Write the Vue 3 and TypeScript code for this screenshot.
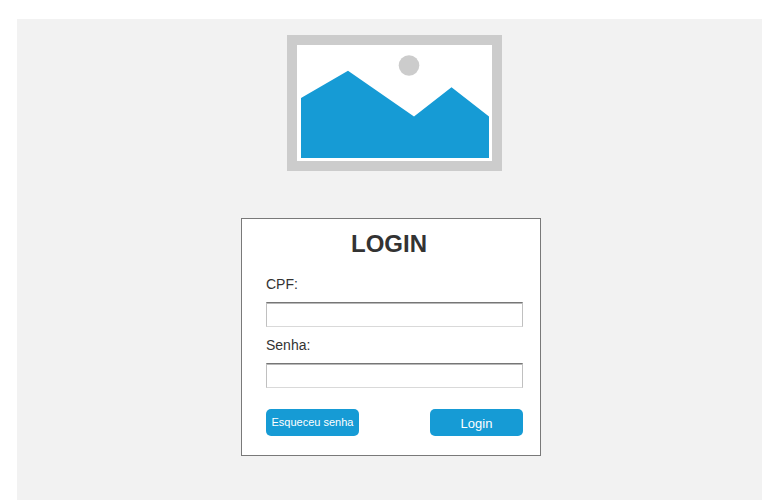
<script setup lang="ts">
import { ref } from 'vue'

const cpf = ref('')
const senha = ref('')
</script>

<template>
  <main class="page">
    <svg class="picture" width="215" height="136" viewBox="0 0 215 136" aria-hidden="true">
      <rect width="215" height="136" fill="#cccccc" />
      <rect x="10" y="10" width="195" height="116" fill="#ffffff" />
      <circle cx="122" cy="30.5" r="10.3" fill="#cccccc" />
      <polygon points="14,63 61,35.7 127,81.5 164.5,52.2 202,81.5 202,123 14,123" fill="#169bd5" />
    </svg>
    <form class="card" @submit.prevent>
      <h1 class="title">LOGIN</h1>
      <label class="label" for="cpf">CPF:</label>
      <input id="cpf" v-model="cpf" class="field" type="text" />
      <label class="label second" for="senha">Senha:</label>
      <input id="senha" v-model="senha" class="field" type="password" />
      <div class="actions">
        <button class="button small" type="button">Esqueceu senha</button>
        <button class="button" type="submit">Login</button>
      </div>
    </form>
  </main>
</template>

<style>
body {
  background: #ffffff;
  overflow: hidden;
}
</style>

<style scoped>
.page {
  box-sizing: border-box;
  height: 481px;
  margin: 19px 0 0 17px;
  padding-top: 16px;
  background: #f2f2f2;
  color: #333333;
  font-family: "Liberation Sans", Arial, sans-serif;
}
.picture {
  display: block;
  margin-left: 270px;
}
.card {
  box-sizing: border-box;
  display: flex;
  flex-direction: column;
  width: 300px;
  height: 238px;
  margin: 47px 0 0 224px;
  padding: 11px 17px 0 24px;
  border: 1px solid #797979;
  background: #ffffff;
}
.title {
  margin: 0 11px 0 0;
  font-size: 24px;
  line-height: 28px;
  font-weight: 700;
  text-align: center;
}
.label {
  margin-top: 18px;
  font-size: 14px;
  line-height: 16px;
}
.label.second {
  margin-top: 10px;
}
.field {
  box-sizing: border-box;
  width: 257px;
  height: 25px;
  margin: 10px 0 0;
  padding: 1px 3px;
  border: 1px solid;
  border-color: #767676 #c0c0c0 #d9d9d9 #c0c0c0;
  border-radius: 0;
  outline: none;
  background: #ffffff;
  box-shadow: inset 0 1px 0 #b8b8b8;
  font: 13px "Liberation Sans", Arial, sans-serif;
}
.actions {
  display: flex;
  justify-content: space-between;
  margin-top: 21px;
}
.button {
  width: 93px;
  height: 27px;
  padding: 2px 0 0;
  border: 0;
  border-radius: 5px;
  background: #169bd5;
  color: #ffffff;
  font: 13px/15px "Liberation Sans", Arial, sans-serif;
  white-space: nowrap;
}
.button.small {
  padding-top: 0;
  font-size: 11px;
}
</style>
